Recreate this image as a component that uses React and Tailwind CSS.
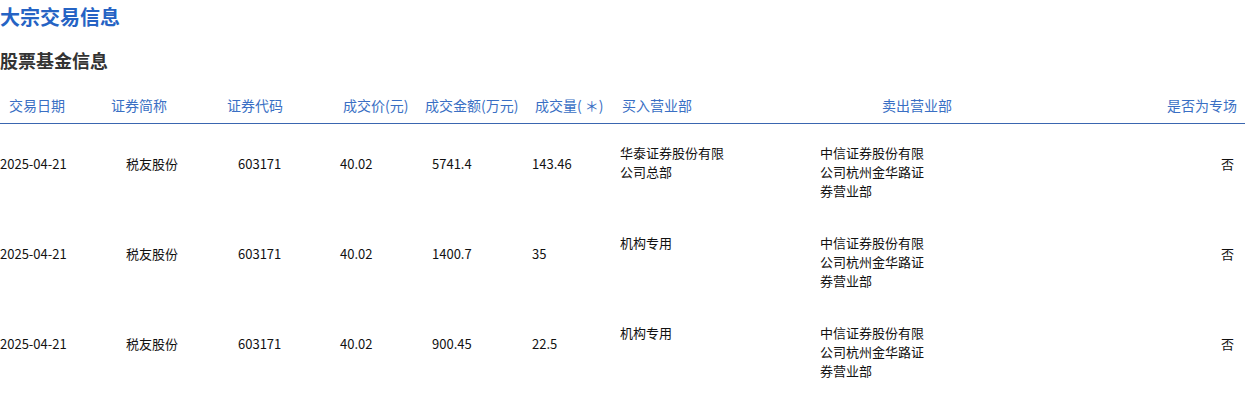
import React from "react";

const rows = [
  { date: "2025-04-21", name: "税友股份", code: "603171", price: "40.02", amount: "5741.4", vol: "143.46", buy: ["华泰证券股份有限", "公司总部"], sell: ["中信证券股份有限", "公司杭州金华路证", "券营业部"], special: "否" },
  { date: "2025-04-21", name: "税友股份", code: "603171", price: "40.02", amount: "1400.7", vol: "35", buy: ["机构专用"], sell: ["中信证券股份有限", "公司杭州金华路证", "券营业部"], special: "否" },
  { date: "2025-04-21", name: "税友股份", code: "603171", price: "40.02", amount: "900.45", vol: "22.5", buy: ["机构专用"], sell: ["中信证券股份有限", "公司杭州金华路证", "券营业部"], special: "否" },
];

export default function App() {
  return (
    <div
      className="w-[1245px] h-[394px] overflow-hidden bg-white pt-[2px]"
      style={{ fontFamily: '"Noto Sans CJK SC", "Noto Sans", sans-serif' }}
    >
      <h1 className="text-[20px] leading-[30px] font-bold text-[#2563c4]">大宗交易信息</h1>
      <h2 className="mt-[15px] text-[18px] leading-[27px] font-bold text-[#333333]">股票基金信息</h2>

      <div className="mt-[21px] flex items-start border-b border-[#3a66b0] pb-[8px] text-[14px] leading-[20px] text-[#3a6fc4]">
        <div className="w-[111px] shrink-0 pl-[9px]">交易日期</div>
        <div className="w-[116px] shrink-0">证券简称</div>
        <div className="w-[116px] shrink-0">证券代码</div>
        <div className="w-[82px] shrink-0">成交价(元)</div>
        <div className="w-[110px] shrink-0">成交金额(万元)</div>
        <div className="w-[87px] shrink-0">成交量( ＊)</div>
        <div className="w-[260px] shrink-0">买入营业部</div>
        <div className="w-[150px] shrink-0">卖出营业部</div>
        <div className="flex-1 pr-[8px] text-right">是否为专场</div>
      </div>

      {rows.map((r, i) => (
        <div key={i} className="flex h-[90px] items-start text-[13px] leading-[19px] text-[#111111]">
          <div className="w-[126px] shrink-0 pt-[29.5px]">{r.date}</div>
          <div className="w-[112px] shrink-0 pt-[29.5px]">{r.name}</div>
          <div className="w-[102px] shrink-0 pt-[29.5px]">{r.code}</div>
          <div className="w-[92px] shrink-0 pt-[29.5px]">{r.price}</div>
          <div className="w-[100px] shrink-0 pt-[29.5px]">{r.amount}</div>
          <div className="w-[88px] shrink-0 pt-[29.5px]">{r.vol}</div>
          <div className="w-[200px] shrink-0 pt-[18.5px]">
            {r.buy.map((l, j) => (
              <div key={j}>{l}</div>
            ))}
          </div>
          <div className="w-[200px] shrink-0 pt-[18.5px]">
            {r.sell.map((l, j) => (
              <div key={j}>{l}</div>
            ))}
          </div>
          <div className="flex-1 pr-[11px] pt-[29.5px] text-right">{r.special}</div>
        </div>
      ))}
    </div>
  );
}
